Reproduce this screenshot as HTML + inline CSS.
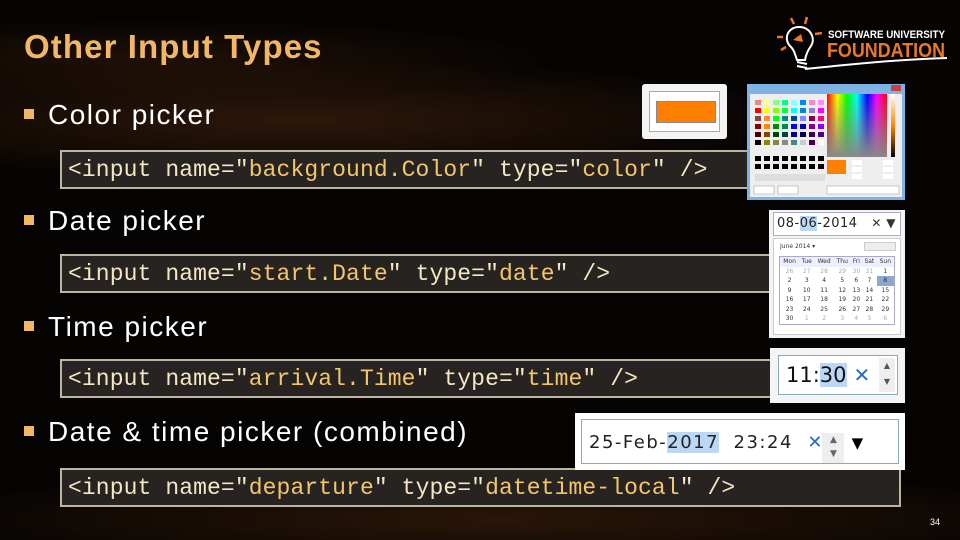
<!DOCTYPE html>
<html><head><meta charset="utf-8"><style>
*{margin:0;padding:0;box-sizing:border-box}
body{width:960px;height:540px;overflow:hidden;background:#050302;position:relative;font-family:"Liberation Sans",sans-serif}
.bg{position:absolute;inset:0;background:
radial-gradient(ellipse 500px 60px at 300px 120px,rgba(120,60,20,.35),transparent),
radial-gradient(ellipse 600px 50px at 500px 520px,rgba(110,55,15,.35),transparent),
radial-gradient(ellipse 400px 40px at 150px 60px,rgba(90,45,15,.3),transparent),#060403}
.t{position:absolute;color:#f2b765;font-weight:bold;font-size:33px;left:24px;top:28px;font-family:"Liberation Sans",sans-serif;letter-spacing:1.1px}
.b{position:absolute;left:24px;color:#fff;font-size:28px;letter-spacing:1.5px}
.b:before{content:"";display:inline-block;width:10px;height:10px;background:#f2b765;margin-right:14px;vertical-align:5px}
.c{position:absolute;left:60px;height:39px;background:#262320;border:2px solid #bdb5a2;font-family:"Liberation Mono",monospace;font-size:23px;color:#f4e7c3;padding:5px 0 0 6px;white-space:pre;letter-spacing:0.1px}
.c i{font-style:normal;color:#f3c66c}
.w{position:absolute;background:#f4f4f4}
</style></head><body>
<div class="bg"></div>
<div class="t">Other Input Types</div>
<svg style="position:absolute;left:775px;top:14px" width="175" height="60" viewBox="0 0 175 60">
<g stroke="#e8792a" stroke-width="2.5" fill="none"><line x1="16" y1="4" x2="19" y2="10"/><line x1="32" y1="3" x2="30" y2="10"/><line x1="2" y1="23" x2="8" y2="23"/><line x1="40" y1="20" x2="47" y2="19"/><line x1="6" y1="36" x2="11" y2="33"/></g>
<path d="M24 13 C12 13 8 26 16 33 C19 36 20 40 22 46 L30 46 C31 40 33 36 36 32 C41 24 35 13 24 13Z" fill="none" stroke="#fff" stroke-width="2"/>
<path d="M18 26 L26 20 L28 28 Z" fill="#e8792a"/>
<path d="M22 48 L32 50 M22 52 L32 54 M30 55 C60 52 110 46 172 44" stroke="#fff" stroke-width="2" fill="none"/>
<text x="53" y="24" fill="#fff" font-family="Liberation Sans" font-weight="bold" font-size="11" textLength="117" lengthAdjust="spacingAndGlyphs">SOFTWARE UNIVERSITY</text>
<text x="52" y="43" fill="#e8792a" font-family="Liberation Sans" font-weight="bold" font-size="20" textLength="118" lengthAdjust="spacingAndGlyphs">FOUNDATION</text>
</svg>

<div class="b" style="top:99px">Color picker</div>
<div class="c" style="top:150px;width:690px">&lt;input name="<i>background.Color</i>" type="<i>color</i>" /&gt;</div>
<div class="b" style="top:205px">Date picker</div>
<div class="c" style="top:254px;width:715px">&lt;input name="<i>start.Date</i>" type="<i>date</i>" /&gt;</div>
<div class="b" style="top:311px">Time picker</div>
<div class="c" style="top:359px;width:712px">&lt;input name="<i>arrival.Time</i>" type="<i>time</i>" /&gt;</div>
<div class="b" style="top:416px">Date &amp; time picker (combined)</div>
<div class="c" style="top:468px;width:841px">&lt;input name="<i>departure</i>" type="<i>datetime-local</i>" /&gt;</div>

<!-- color preview -->
<div class="w" style="left:642px;top:84px;width:85px;height:55px;border-radius:3px"><div style="position:absolute;left:7px;top:7px;width:71px;height:41px;background:#fff;border:1px solid #aaa"><div style="position:absolute;left:6px;top:9px;width:60px;height:22px;background:#ff8000;border:1px solid #888"></div></div></div>
<!-- color dialog -->
<div style="position:absolute;left:747px;top:84px;width:158px;height:116px;background:#7fb2e5;padding:10px 3px 3px">
<div style="position:absolute;right:4px;top:1px;width:10px;height:6px;background:#c84040"></div>
<div style="background:#eee;width:100%;height:100%;position:relative">
<svg width="152" height="103" style="position:absolute;left:0;top:0">
<defs><linearGradient id="h" x1="0" x2="1"><stop offset="0" stop-color="#f00"/><stop offset=".17" stop-color="#ff0"/><stop offset=".33" stop-color="#0f0"/><stop offset=".5" stop-color="#0ff"/><stop offset=".67" stop-color="#00f"/><stop offset=".83" stop-color="#f0f"/><stop offset="1" stop-color="#f00"/></linearGradient>
<linearGradient id="g" x1="0" y1="0" x2="0" y2="1"><stop offset="0" stop-color="#888" stop-opacity="0"/><stop offset="1" stop-color="#888"/></linearGradient>
<linearGradient id="v" x1="0" y1="0" x2="0" y2="1"><stop offset="0" stop-color="#fff"/><stop offset=".5" stop-color="#f80"/><stop offset="1" stop-color="#000"/></linearGradient></defs>
<rect x="77" y="0" width="60" height="63" fill="url(#h)"/><rect x="77" y="0" width="60" height="63" fill="url(#g)"/>
<rect x="141" y="0" width="4" height="63" fill="url(#v)"/>
<rect x="77" y="66" width="19" height="14" fill="#ff8000"/>
<g>
<rect x="5" y="6" width="6" height="5" fill="#e88"/><rect x="14" y="6" width="6" height="5" fill="#ff8"/><rect x="23" y="6" width="6" height="5" fill="#8f8"/><rect x="32" y="6" width="6" height="5" fill="#0f8"/><rect x="41" y="6" width="6" height="5" fill="#8ff"/><rect x="50" y="6" width="6" height="5" fill="#08f"/><rect x="59" y="6" width="6" height="5" fill="#f8c"/><rect x="68" y="6" width="6" height="5" fill="#f8f"/>
<rect x="5" y="14" width="6" height="5" fill="#f00"/><rect x="14" y="14" width="6" height="5" fill="#ff0"/><rect x="23" y="14" width="6" height="5" fill="#8f0"/><rect x="32" y="14" width="6" height="5" fill="#0f4"/><rect x="41" y="14" width="6" height="5" fill="#0ff"/><rect x="50" y="14" width="6" height="5" fill="#08c"/><rect x="59" y="14" width="6" height="5" fill="#88c"/><rect x="68" y="14" width="6" height="5" fill="#f0f"/>
<rect x="5" y="22" width="6" height="5" fill="#844"/><rect x="14" y="22" width="6" height="5" fill="#f84"/><rect x="23" y="22" width="6" height="5" fill="#0f0"/><rect x="32" y="22" width="6" height="5" fill="#088"/><rect x="41" y="22" width="6" height="5" fill="#048"/><rect x="50" y="22" width="6" height="5" fill="#88f"/><rect x="59" y="22" width="6" height="5" fill="#804"/><rect x="68" y="22" width="6" height="5" fill="#f08"/>
<rect x="5" y="30" width="6" height="5" fill="#800"/><rect x="14" y="30" width="6" height="5" fill="#f80"/><rect x="23" y="30" width="6" height="5" fill="#080"/><rect x="32" y="30" width="6" height="5" fill="#084"/><rect x="41" y="30" width="6" height="5" fill="#00f"/><rect x="50" y="30" width="6" height="5" fill="#00a"/><rect x="59" y="30" width="6" height="5" fill="#808"/><rect x="68" y="30" width="6" height="5" fill="#80f"/>
<rect x="5" y="38" width="6" height="5" fill="#400"/><rect x="14" y="38" width="6" height="5" fill="#840"/><rect x="23" y="38" width="6" height="5" fill="#040"/><rect x="32" y="38" width="6" height="5" fill="#044"/><rect x="41" y="38" width="6" height="5" fill="#008"/><rect x="50" y="38" width="6" height="5" fill="#004"/><rect x="59" y="38" width="6" height="5" fill="#404"/><rect x="68" y="38" width="6" height="5" fill="#408"/>
<rect x="5" y="46" width="6" height="5" fill="#000"/><rect x="14" y="46" width="6" height="5" fill="#880"/><rect x="23" y="46" width="6" height="5" fill="#884"/><rect x="32" y="46" width="6" height="5" fill="#888"/><rect x="41" y="46" width="6" height="5" fill="#488"/><rect x="50" y="46" width="6" height="5" fill="#ccc"/><rect x="59" y="46" width="6" height="5" fill="#404"/><rect x="68" y="46" width="6" height="5" fill="#fff"/>
</g>
<g fill="#000"><rect x="5" y="62" width="6" height="5"/><rect x="14" y="62" width="6" height="5"/><rect x="23" y="62" width="6" height="5"/><rect x="32" y="62" width="6" height="5"/><rect x="41" y="62" width="6" height="5"/><rect x="50" y="62" width="6" height="5"/><rect x="59" y="62" width="6" height="5"/><rect x="68" y="62" width="6" height="5"/>
<rect x="5" y="70" width="6" height="5"/><rect x="14" y="70" width="6" height="5"/><rect x="23" y="70" width="6" height="5"/><rect x="32" y="70" width="6" height="5"/><rect x="41" y="70" width="6" height="5"/><rect x="50" y="70" width="6" height="5"/><rect x="59" y="70" width="6" height="5"/><rect x="68" y="70" width="6" height="5"/></g>
<rect x="5" y="80" width="70" height="7" fill="#ddd"/><rect x="4" y="92" width="20" height="8" fill="#fff" stroke="#999" stroke-width=".5"/><rect x="28" y="92" width="20" height="8" fill="#fff" stroke="#999" stroke-width=".5"/><rect x="77" y="92" width="72" height="8" fill="#fff" stroke="#999" stroke-width=".5"/>
<rect x="102" y="66" width="10" height="5" fill="#fff"/><rect x="102" y="73" width="10" height="5" fill="#fff"/><rect x="102" y="80" width="10" height="5" fill="#fff"/><rect x="133" y="66" width="10" height="5" fill="#fff"/><rect x="133" y="73" width="10" height="5" fill="#fff"/><rect x="133" y="80" width="10" height="5" fill="#fff"/>
</svg></div></div>

<!-- date picker -->
<div class="w" style="left:769px;top:210px;width:136px;height:128px;font-family:'DejaVu Sans',sans-serif">
<div style="position:absolute;left:4px;top:2px;width:128px;height:24px;background:#fff;border:1px solid #aac;font-size:13px;padding:3px 3px;color:#222;letter-spacing:0.5px">08-<span style="background:#bcd7f5">06</span>-2014<span style="position:absolute;right:4px;top:3px;font-size:12px;color:#333">✕ ▼</span></div>
<div style="position:absolute;left:4px;top:28px;width:128px;height:97px;border:1px solid #ccc;background:#fff;font-size:6px;color:#333">
<div style="position:absolute;left:6px;top:4px">June 2014 ▾</div>
<div style="position:absolute;right:4px;top:3px;width:32px;height:9px;background:#eee;border:1px solid #ccc"></div>
<table style="position:absolute;left:5px;top:17px;width:116px;border:1px solid #aac;border-collapse:collapse;font-size:6px;text-align:center;line-height:9.5px">
<tr style="background:#eef"><td>Mon</td><td>Tue</td><td>Wed</td><td>Thu</td><td>Fri</td><td>Sat</td><td>Sun</td></tr>
<tr style="color:#aaa"><td>26</td><td>27</td><td>28</td><td>29</td><td>30</td><td>31</td><td style="color:#333">1</td></tr>
<tr><td>2</td><td>3</td><td>4</td><td>5</td><td>6</td><td>7</td><td style="background:#8aa8d0">8</td></tr>
<tr><td>9</td><td>10</td><td>11</td><td>12</td><td>13</td><td>14</td><td>15</td></tr>
<tr><td>16</td><td>17</td><td>18</td><td>19</td><td>20</td><td>21</td><td>22</td></tr>
<tr><td>23</td><td>24</td><td>25</td><td>26</td><td>27</td><td>28</td><td>29</td></tr>
<tr style="color:#aaa"><td style="color:#333">30</td><td>1</td><td>2</td><td>3</td><td>4</td><td>5</td><td>6</td></tr>
</table></div></div>

<!-- time -->
<div class="w" style="left:770px;top:348px;width:135px;height:55px">
<div style="position:absolute;left:8px;top:7px;width:120px;height:40px;background:#fff;border:1px solid #8ab;font-family:'DejaVu Sans',sans-serif;font-size:21px;color:#111;padding:7px 0 0 7px">11:<span style="background:#bcd7f5">30</span><span style="color:#2a6ac8;font-weight:bold;font-size:20px"> ✕</span><span style="position:absolute;right:2px;top:2px;width:16px;height:34px;background:#eee;font-size:8px;color:#555;text-align:center;line-height:16px">▲<br>▼</span></div></div>

<!-- datetime -->
<div class="w" style="left:575px;top:413px;width:330px;height:57px;background:#fff">
<div style="position:absolute;left:6px;top:6px;width:318px;height:45px;border:1px solid #8ab;font-family:'DejaVu Sans',sans-serif;font-size:18px;color:#222;padding:12px 0 0 7px;white-space:pre;letter-spacing:1.5px">25-Feb-<span style="background:#bcd7f5">2017</span>  23:24  <span style="color:#2a6ac8;font-weight:bold;letter-spacing:0">✕</span><span style="display:inline-block;width:22px;height:30px;background:#eee;vertical-align:-8px;font-size:9px;color:#666;text-align:center;line-height:14px;letter-spacing:0">▲<br>▼</span> <span style="font-size:15px;color:#000">▼</span></div></div>

<div style="position:absolute;left:930px;top:517px;color:#fff;font-size:9px">34</div>
</body></html>
